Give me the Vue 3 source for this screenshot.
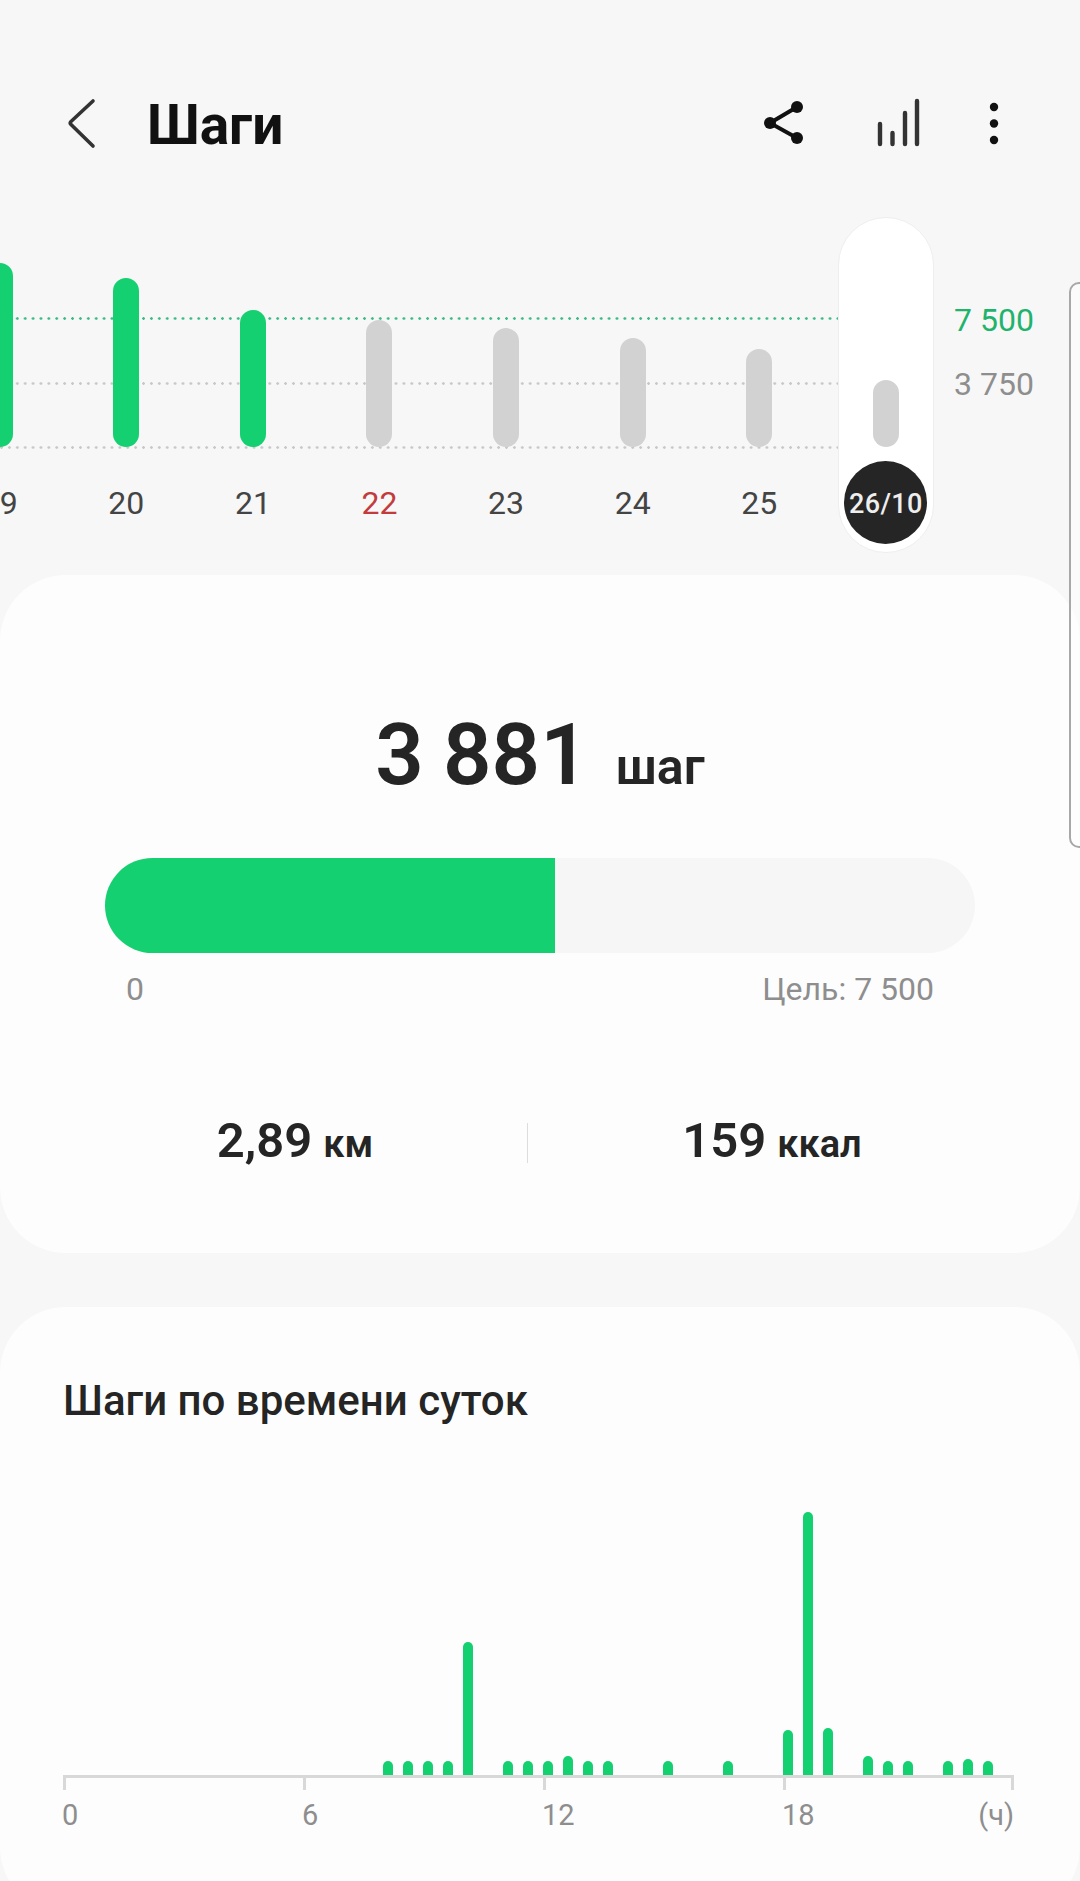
<script setup>
import { computed } from 'vue'

const days = [
  { label: '19', height: 184, done: true },
  { label: '20', height: 169, done: true },
  { label: '21', height: 137, done: true },
  { label: '22', height: 127, red: true },
  { label: '23', height: 119 },
  { label: '24', height: 109 },
  { label: '25', height: 98 },
  { label: '26/10', height: 67, current: true },
]

const steps = 3881
const goal = 7500
const progress = computed(() => (steps / goal) * 100 + '%')

// высота столбика для каждого получаса (индекс = номер получаса)
const hourly = { 16: 14, 17: 14, 18: 14, 19: 14, 20: 133, 22: 14, 23: 14, 24: 14, 25: 19, 26: 14, 27: 14, 30: 14, 33: 14, 36: 45, 37: 263, 38: 47, 40: 19, 41: 14, 42: 14, 44: 14, 45: 16, 46: 14 }
const slots = Array.from({ length: 48 }, (_, i) => hourly[i] || 0)
const ticks = ['0', '6', '12', '18']
</script>

<template>
  <div class="page">
    <header class="topbar">
      <svg class="back" width="40" height="56" viewBox="0 0 40 56" fill="none">
        <path d="M33 6 L11 26.5 Q9.5 28 11 29.5 L33 51" stroke="#333" stroke-width="3.6" stroke-linecap="round" stroke-linejoin="round" />
      </svg>
      <h1>Шаги</h1>
      <svg class="share" width="48" height="48" viewBox="0 0 48 48" fill="#111" stroke="#111">
        <path d="M37 8 L10 24 L37 39" fill="none" stroke-width="4" />
        <circle cx="10" cy="24" r="6" stroke="none" />
        <circle cx="37" cy="8" r="6" stroke="none" />
        <circle cx="37" cy="39" r="6" stroke="none" />
      </svg>
      <svg class="stats" width="52" height="52" viewBox="0 0 52 52" fill="none" stroke="#333" stroke-width="4.4" stroke-linecap="round">
        <path d="M7 27 V47 M19.5 36 V47 M32 16 V47 M44 4 V47" />
      </svg>
      <svg class="more" width="20" height="48" viewBox="0 0 20 48" fill="#111">
        <circle cx="10" cy="8" r="4.2" />
        <circle cx="10" cy="24.5" r="4.2" />
        <circle cx="10" cy="41" r="4.2" />
      </svg>
    </header>

    <section class="trend">
      <div class="line line-goal"></div>
      <div class="line line-half"></div>
      <div class="line line-zero"></div>

      <div class="days">
        <div v-for="day in days" :key="day.label" class="day" :class="{ current: day.current }">
          <div v-if="day.current" class="capsule"></div>
          <div class="plot">
            <div class="day-bar" :class="{ done: day.done }" :style="{ height: day.height + 'px' }"></div>
          </div>
          <div class="day-label" :class="{ red: day.red }">
            <span>{{ day.label }}</span>
          </div>
        </div>
      </div>

      <span class="level level-goal">7 500</span>
      <span class="level level-half">3 750</span>
    </section>

    <section class="card summary">
      <div class="count"><strong>3 881</strong><span>шаг</span></div>
      <div class="track"><div class="fill" :style="{ width: progress }"></div></div>
      <div class="track-labels"><span>0</span><span>Цель: 7 500</span></div>
      <div class="totals">
        <div class="total"><strong>2,89</strong><span>км</span></div>
        <div class="divider"></div>
        <div class="total"><strong>159</strong><span>ккал</span></div>
      </div>
    </section>

    <section class="card hours">
      <h2>Шаги по времени суток</h2>
      <div class="hour-plot">
        <div v-for="(h, i) in slots" :key="i" class="slot">
          <div v-if="h" class="hour-bar" :style="{ height: h + 'px' }"></div>
        </div>
      </div>
      <div class="axis">
        <div v-for="t in ticks" :key="t" class="tick"></div>
      </div>
      <div class="axis-labels">
        <span v-for="t in ticks" :key="t">{{ t }}</span>
        <span class="unit">(ч)</span>
      </div>
    </section>

    <div class="edge-handle"></div>
  </div>
</template>

<style>
html,
body {
  margin: 0;
  background: #f7f7f7;
}
</style>

<style scoped>
.page {
  position: relative;
  width: 1080px;
  height: 1881px;
  overflow: hidden;
  background: #f7f7f7;
  font-family: Roboto, "Noto Sans", sans-serif;
  color: #252525;
}

.topbar {
  display: flex;
  align-items: center;
  height: 94px;
  padding: 76px 76px 0 60px;
}

.topbar h1 {
  flex: 1;
  margin: 4px 0 0 47px;
  font-size: 55px;
  font-weight: 700;
  color: #111;
}

.stats {
  margin-left: 65px;
}

.more {
  margin-left: 59px;
}

.trend {
  position: relative;
  height: 405px;
  overflow: hidden;
}

.line {
  position: absolute;
  left: 0;
  width: 840px;
  height: 3px;
  background-image: radial-gradient(circle at 1.5px 1.5px, #c8c8c8 1.2px, transparent 1.5px);
  background-size: 7.9px 3px;
}

.line-goal {
  top: 147px;
  background-image: radial-gradient(circle at 1.5px 1.5px, #3dba8a 1.2px, transparent 1.5px);
}

.line-half {
  top: 212px;
}

.line-zero {
  top: 276px;
}

.days {
  display: flex;
  margin-left: -63.6px;
}

.day {
  position: relative;
  flex: none;
  width: 126.6px;
}

.capsule {
  position: absolute;
  top: 47px;
  left: 15.3px;
  box-sizing: border-box;
  width: 96px;
  height: 336px;
  background: #fff;
  border: 1px solid #eeeeee;
  border-radius: 48px;
}

.plot {
  position: relative;
  display: flex;
  align-items: flex-end;
  justify-content: center;
  height: 277px;
}

.day-bar {
  width: 26px;
  background: #d2d2d2;
  border-radius: 13px;
}

.day-bar.done {
  background: #14d070;
}

.day-label {
  position: relative;
  margin-top: 28px;
  font-size: 32px;
  line-height: 56px;
  text-align: center;
  color: #444;
}

.day-label.red {
  color: #c23b3d;
}

.current .day-label {
  display: flex;
  align-items: center;
  justify-content: center;
  box-sizing: border-box;
  width: 83px;
  height: 83px;
  margin: 14px auto 0;
  padding-top: 3px;
  background: #252525;
  border-radius: 50%;
  font-size: 27px;
  font-weight: 500;
  letter-spacing: 0.4px;
  line-height: 1;
  color: #eee;
}

.level {
  position: absolute;
  left: 954px;
  font-size: 32px;
  line-height: 40px;
}

.level-goal {
  top: 130px;
  color: #1fb36c;
}

.level-half {
  top: 194px;
  color: #8e8e8e;
}

.card {
  background: #fdfdfd;
  border-radius: 66px;
}

.summary {
  box-sizing: border-box;
  height: 678px;
  margin-bottom: 54px;
  padding-top: 130px;
}

.count {
  display: flex;
  align-items: baseline;
  justify-content: center;
  gap: 27px;
  line-height: 100px;
}

.count strong {
  font-size: 85px;
  font-weight: 600;
  word-spacing: -2px;
}

.count span {
  font-size: 50px;
  font-weight: 600;
}

.track {
  width: 870px;
  height: 95px;
  margin: 41px 0 0 105px;
  overflow: hidden;
  background: #f6f6f6;
  border-radius: 48px;
}

.fill {
  height: 100%;
  background: #14d070;
}

.track-labels {
  display: flex;
  justify-content: space-between;
  margin: 16px 146px 0 126px;
  font-size: 32px;
  line-height: 40px;
  color: #8e8e8e;
}

.totals {
  display: grid;
  grid-template-columns: 464px 1px 488px;
  align-items: center;
  margin: 102px 0 0 63px;
}

.total {
  display: flex;
  align-items: baseline;
  justify-content: center;
  gap: 11px;
  line-height: 60px;
}

.total strong {
  font-size: 49px;
  font-weight: 600;
}

.total span {
  font-size: 38px;
  font-weight: 600;
}

.divider {
  height: 40px;
  background: #dddddd;
}

.hours {
  height: 606px;
  padding-top: 69px;
  box-sizing: border-box;
}

.hours h2 {
  margin: 0 0 0 63px;
  font-size: 42px;
  font-weight: 500;
  line-height: 50px;
}

.hour-plot {
  display: flex;
  align-items: flex-end;
  height: 270px;
  margin: 79px 0 0 58.2px;
}

.slot {
  display: flex;
  flex: none;
  justify-content: center;
  width: 20px;
}

.hour-bar {
  width: 10px;
  background: #14d070;
  border-radius: 5px 5px 0 0;
}

.axis {
  display: grid;
  grid-template-columns: 240px 240px 240px 228px;
  box-sizing: border-box;
  width: 951px;
  height: 15px;
  margin-left: 63px;
  border-top: 3px solid #d8d8d8;
  border-right: 3px solid #d8d8d8;
}

.tick {
  border-left: 3px solid #d8d8d8;
}

.axis-labels {
  display: grid;
  grid-template-columns: 240px 240px 240px 96px 1fr;
  width: 952px;
  margin: 5px 0 0 62px;
  font-size: 29px;
  line-height: 40px;
  color: #8e8e8e;
}

.unit {
  text-align: right;
}

.edge-handle {
  position: absolute;
  top: 282px;
  left: 1069px;
  box-sizing: border-box;
  width: 20px;
  height: 566px;
  background: rgba(255, 255, 255, 0.5);
  border: 2px solid #a8a8a8;
  border-radius: 14px;
}
</style>
